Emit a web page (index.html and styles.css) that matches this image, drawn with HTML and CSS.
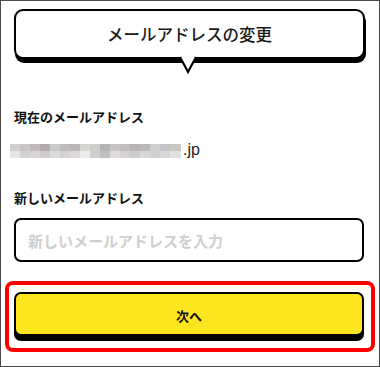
FILE: index.html
```html
<!DOCTYPE html>
<html lang="ja">
<head>
<meta charset="utf-8">
<title>メールアドレスの変更</title>
<link rel="stylesheet" href="styles.css">
</head>
<body>
<div class="frame">
  <div class="bubble">
    <h1 class="bubble-title">メールアドレスの変更</h1>
    <svg class="bubble-tail" width="18" height="19" viewBox="0 0 18 19" aria-hidden="true">
      <polygon points="1,0 9,16 17,0" fill="#fff"/>
      <polyline points="1,1 9,16 17,1" fill="none" stroke="#000" stroke-width="2.2" stroke-linejoin="miter"/>
    </svg>
  </div>

  <p class="label label-current">現在のメールアドレス</p>
  <div class="email-row">
    <span class="mosaic" aria-hidden="true"></span><span class="email-tld">.jp</span>
  </div>

  <p class="label label-new">新しいメールアドレス</p>
  <input class="email-input" type="text" placeholder="新しいメールアドレスを入力">

  <div class="highlight">
    <button class="next-button" type="button">次へ</button>
  </div>
</div>
</body>
</html>
```
FILE: styles.css
```css
* {
  box-sizing: border-box;
}

html, body {
  margin: 0;
  padding: 0;
  background: #fff;
}

body {
  font-family: "Noto Sans CJK JP", "Noto Sans", sans-serif;
  color: #111;
}

.frame {
  width: 380px;
  height: 367px;
  border: 1px solid #4a4a4a;
  padding: 0 14px 0 13px;
  display: flex;
  flex-direction: column;
  overflow: hidden;
}

.bubble {
  position: relative;
  margin-top: 8px;
  height: 50px;
  width: 351px;
  border: 2px solid #000;
  border-radius: 9px;
  box-shadow: 1px 4px 0 #000;
  display: flex;
  align-items: center;
  justify-content: center;
  background: #fff;
}

.bubble-title {
  margin: 0;
  font-size: 16.5px;
  font-weight: 500;
  line-height: 1;
  color: #1a1a1a;
  padding-top: 1px;
}

.bubble-tail {
  position: absolute;
  left: 163px;
  top: 45px;
  display: block;
}

.label {
  margin: 0;
  font-size: 13px;
  font-weight: 700;
  line-height: 20px;
  color: #111;
}

.label-current {
  margin-top: 48px;
}

.email-row {
  margin-top: 13px;
  height: 20px;
  display: flex;
  align-items: center;
  margin-left: -4px;
}

.mosaic {
  display: block;
  width: 171px;
  height: 14px;
  margin-top: 2px;
  background:
    linear-gradient(90deg,
      #d2d0d1 0 10px, #c9c5c7 10px 20px, #c0babc 20px 30px, #b3aaae 30px 40px,
      #c8c9c9 40px 50px, #bfbcbd 50px 60px, #b9b6b9 60px 70px, #d5d6d2 70px 80px,
      #cfcfcf 80px 90px, #b4b4b6 90px 100px, #c7c3c4 100px 110px, #c2bfc2 110px 120px,
      #b9b3b7 120px 130px, #bbb8ba 130px 140px, #cfcdcd 140px 150px, #c5c4c8 150px 160px,
      #cac6c6 160px 171px) top / 100% 7px no-repeat,
    linear-gradient(90deg,
      #e6e6e4 0 10px, #d3d0d3 10px 20px, #d8d4d4 20px 30px, #cfcbd1 30px 40px,
      #dadada 40px 50px, #d4d2d1 50px 60px, #dcd8de 60px 70px, #ececea 70px 80px,
      #d0cecd 80px 90px, #bdbfc1 90px 100px, #dfdcda 100px 110px, #d4d2d4 110px 120px,
      #cdcbcd 120px 130px, #d8d8d8 130px 140px, #d2d1d2 140px 150px, #d6d8d8 150px 160px,
      #e2e2e0 160px 171px) bottom / 100% 7px no-repeat;
}

.email-tld {
  margin-left: 2px;
  font-family: "Liberation Sans", Arial, sans-serif;
  font-size: 16px;
  line-height: 20px;
  color: #222;
}

.label-new {
  margin-top: 28px;
}

.email-input {
  margin-top: 10px;
  width: 350px;
  height: 44px;
  border: 2px solid #000;
  border-radius: 7px;
  padding: 0 12px;
  font-family: "Noto Sans CJK JP", "Noto Sans", sans-serif;
  font-size: 15px;
  font-weight: 700;
  color: #111;
  background: #fff;
  outline: none;
}

.email-input::placeholder {
  color: #cfcfcf;
}

.highlight {
  margin: 19px -11px 0 -9px;
  width: 370px;
  height: 71px;
  border: 4px solid #ff0000;
  border-radius: 8px;
  padding: 7px 7px 7px 5px;
}

.next-button {
  display: block;
  width: 350px;
  height: 44px;
  border: 2px solid #000;
  border-radius: 7px;
  background: #fde61f;
  box-shadow: 0 5px 0 #000;
  font-family: "Noto Sans CJK JP", "Noto Sans", sans-serif;
  font-size: 13px;
  font-weight: 700;
  color: #111;
  padding: 2px 0 0 0;
  cursor: pointer;
}
```
